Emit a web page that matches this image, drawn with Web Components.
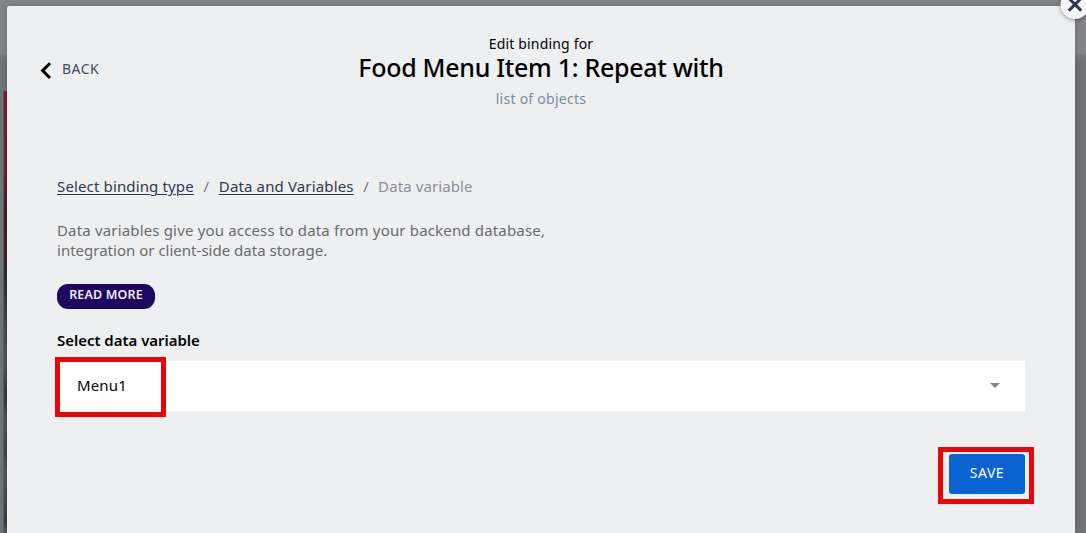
<!DOCTYPE html>
<html lang="en">
<head>
<meta charset="utf-8">
<title>Edit binding</title>
<style>
html,body{margin:0;height:100%;overflow:hidden}
body{font-family:"Noto Sans","Open Sans",sans-serif;color:#020303}
</style>
</head>
<body>
<binding-backdrop>
  <binding-dialog>
    <back-link slot="back">BACK</back-link>
    <dialog-heading slot="heading">
      <span slot="kicker">Edit binding for</span>
      <span slot="title">Food Menu Item 1: Repeat with</span>
      <span slot="kind">list of objects</span>
    </dialog-heading>
    <bread-crumbs>
      <span slot="first">Select binding type</span>
      <span slot="second">Data and Variables</span>
      <span slot="current">Data variable</span>
    </bread-crumbs>
    <help-text>
      <span slot="line1">Data variables give you access to data from your backend database,</span>
      <span slot="line2">integration or client-side data storage.</span>
    </help-text>
    <pill-button>READ MORE</pill-button>
    <select-field><span slot="label">Select data variable</span><span slot="value">Menu1</span></select-field>
    <save-button>SAVE</save-button>
  </binding-dialog>
</binding-backdrop>
<script>
const define = (name, html) => customElements.define(name, class extends HTMLElement {
  constructor() {
    super();
    this.attachShadow({mode: "open"}).innerHTML = html;
  }
});

define("binding-backdrop", `
<style>
:host{display:block;box-sizing:border-box;height:100vh;padding:6px 11px 0 7px;position:relative;overflow:hidden;
  background:linear-gradient(#858687 0,#858687 53px,#7a7c7d 55px,#75787a 60px,#707577 61px,#707577 100%)}
.page{position:absolute;left:4px;top:91px;bottom:0;width:3px;
  background:linear-gradient(#7a1f3a 0,#721b34 90px,#401e27 120px,#4b1e29 158px,#2c2c33 180px,#35383f 205px,#4a4e56 240px,#515a61 272px,#343941 305px,#515961 330px,#3c464e 360px,#535c63 380px,#465159 405px,#344149 430px,#505b62 442px)}
.edge{position:absolute;left:3px;top:91px;bottom:0;width:1px;background:#5f6567}
</style>
<div class="page"></div><div class="edge"></div><slot></slot>`);

define("binding-dialog", `
<style>
:host{display:block;position:relative;box-sizing:border-box;height:527px;background:#eeeff1;border-radius:2px 2px 0 0;box-shadow:0 0 9px rgba(0,0,0,.22)}
header{display:grid;grid-template-columns:1fr auto 1fr;padding:28px 33px 0;height:142px;align-items:start}
main{display:flex;flex-direction:column;align-items:flex-start;padding:0 50px}
.close{position:absolute;right:-15px;top:-16px;width:30px;height:30px}
.close svg{display:block;filter:drop-shadow(0 1px 2px rgba(0,0,0,.4))}
</style>
<header><slot name="back"></slot><slot name="heading"></slot></header>
<main><slot></slot></main>
<div class="close"><svg width="30" height="30" viewBox="0 0 30 30" overflow="visible"><circle cx="15" cy="14.5" r="14.5" fill="#f4f4f5"/><path d="M8.8 8.2 21.2 20.6M21.2 8.2 8.8 20.6" stroke="#32394d" stroke-width="3"/></svg></div>`);

define("back-link", `
<style>
:host{display:flex;align-items:center;height:20px;margin-top:25px;font-size:14px;line-height:20px;letter-spacing:.5px;color:#3f4b5e}
svg{margin-right:10px;position:relative;top:2px}
</style>
<svg width="12" height="18" viewBox="0 0 12 18"><path d="M10 1.2 2.6 8.6 10 16" fill="none" stroke="#000" stroke-width="3"/></svg><slot></slot>`);

define("dialog-heading", `
<style>
:host{display:flex;flex-direction:column;align-items:center;white-space:nowrap}
.k{font-size:14px;line-height:20px;letter-spacing:.17px}
.t{font-size:25px;line-height:30px;font-weight:500;letter-spacing:-.3px;margin:-2px 0 7px;color:#000}
.s{font-size:14px;line-height:20px;letter-spacing:.27px;color:#7b8ba5}
</style>
<div class="k"><slot name="kicker"></slot></div><div class="t"><slot name="title"></slot></div><div class="s"><slot name="kind"></slot></div>`);

define("bread-crumbs", `
<style>
:host{display:flex;height:20px;font-size:15px;line-height:20px;letter-spacing:.14px;white-space:nowrap;color:#32394d}
.link{text-decoration:underline;text-decoration-thickness:1px;text-underline-offset:2px}
i{font-style:normal;width:25px;text-align:center;color:#74777c}
.now{color:#8b8e96;letter-spacing:.1px;margin-left:-.5px}
</style>
<span class="link"><slot name="first"></slot></span><i>/</i><span class="link"><slot name="second"></slot></span><i>/</i><span class="now"><slot name="current"></slot></span>`);

define("help-text", `
<style>
:host{display:block;margin-top:24px;font-size:15px;line-height:20px;color:#6a6b6d;white-space:nowrap}
.one{letter-spacing:.165px}.two{letter-spacing:.01px}
</style>
<div class="one"><slot name="line1"></slot></div><div class="two"><slot name="line2"></slot></div>`);

define("pill-button", `
<style>
:host{display:block;box-sizing:border-box;width:98px;height:25px;margin-top:24px;border-radius:11px;background:#1d0761;color:#f0edf6;text-align:center;font-size:12.5px;font-weight:600;line-height:22px;letter-spacing:.15px}
</style>
<slot></slot>`);

define("select-field", `
<style>
:host{display:block;width:968px;margin-top:21px}
.label{font-size:15px;font-weight:600;line-height:20px;letter-spacing:-.03px}
.box{position:relative;display:flex;align-items:center;justify-content:space-between;height:50px;box-sizing:border-box;margin-top:11px;padding:0 25px 2px 20px;background:#fff;font-size:15px;line-height:48px;letter-spacing:.15px}
.mark{position:absolute;left:-2px;top:-4px;width:111px;height:60px;box-sizing:border-box;border:5px solid #e90606}
.mark::after{content:"";position:absolute;left:0;right:0;bottom:0;height:1px;background:#fff}
</style>
<div class="label"><slot name="label"></slot></div>
<div class="box"><slot name="value"></slot><svg width="10" height="5" viewBox="0 0 10 5"><path d="M0 0h10L5 5z" fill="#85868f"/></svg><div class="mark"></div></div>`);

define("save-button", `
<style>
:host{display:block;position:relative;align-self:flex-end;width:76px;height:40px;margin:43px 0 0;border-radius:3px;background:#0b63d1;color:#fff;text-align:center;font-size:14px;line-height:38px;letter-spacing:.5px}
.mark{position:absolute;left:-11px;top:-7px;width:96px;height:57px;box-sizing:border-box;border:5px solid #e90606}
</style>
<slot></slot><div class="mark"></div>`);
</script>
</body>
</html>
